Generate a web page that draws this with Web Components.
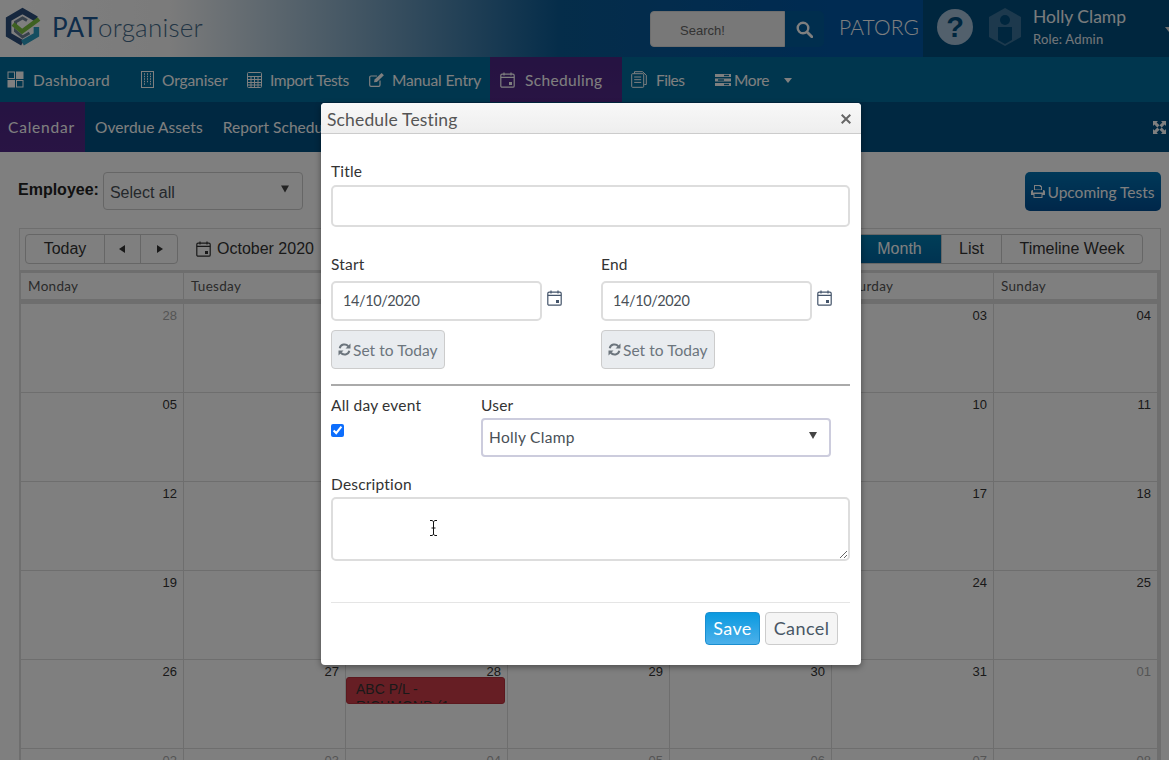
<!DOCTYPE html>
<html><head><meta charset="utf-8"><title>PATorganiser</title>
<style>html,body{margin:0;padding:0;background:#fff}body{font-family:Lato,"Liberation Sans",sans-serif}</style>
</head><body>
<pat-app></pat-app>
<script>
const GOTHIC = 'Lato,"Open Sans",sans-serif', ARIAL='"Liberation Sans",Arial,sans-serif';
function def(name, css, html, setup){
  customElements.define(name, class extends HTMLElement{
    connectedCallback(){
      if(this.shadowRoot) return;
      const r=this.attachShadow({mode:'open'});
      const h = typeof html==='function'? html(this):html;
      r.innerHTML=`<style>${css}</style>${h}`;
      if(setup) setup(r,this);
    }
  });
}
const ic={
 dash:'<svg width="17" height="17" viewBox="0 0 17 17" fill="none" stroke="currentColor"><rect x="1" y="1" width="6.5" height="6.5"/><rect x="9.5" y="1" width="6.5" height="6.5" fill="currentColor"/><rect x="1" y="9.5" width="6.5" height="6.5" fill="currentColor"/><rect x="9.5" y="9.5" width="6.5" height="6.5"/></svg>',
 org:'<svg width="13" height="17" viewBox="0 0 13 17" fill="none" stroke="currentColor"><rect x=".5" y=".5" width="12" height="16"/><path d="M3 3h1M6 3h1M9 3h1M3 5.5h1M6 5.5h1M9 5.5h1M3 8h1M6 8h1M9 8h1M3 10.5h1M6 10.5h1M9 10.5h1M3 13h1M9 13h1" stroke-width="1.4"/></svg>',
 calc:'<svg width="15" height="16" viewBox="0 0 15 16" fill="none" stroke="currentColor"><rect x=".5" y=".5" width="14" height="15" rx="1"/><path d="M.5 4.5h14M.5 7.5h14M.5 10.5h14M.5 13h14M4 4.5V15M7.5 4.5V15M11 4.5V15"/></svg>',
 edit:'<svg width="16" height="15" viewBox="0 0 16 15" fill="none" stroke="currentColor" stroke-width="1.2"><path d="M11 8.5V13a1.3 1.3 0 0 1-1.3 1.3H2A1.3 1.3 0 0 1 .7 13V5.3A1.3 1.3 0 0 1 2 4h6"/><path d="M5 10.2 5.6 7.6 12.6 .9l2.3 2.3-7 6.7z" fill="currentColor" stroke="none"/></svg>',
 cal:'<svg width="15" height="16" viewBox="0 0 15 16" fill="none" stroke="currentColor" stroke-width="1.2"><rect x=".8" y="2.2" width="13.4" height="13" rx="1.3"/><path d="M.8 5.4h13.4M4 .6v3M11 .6v3"/><rect x="9" y="10" width="3" height="3" fill="currentColor" stroke="none"/></svg>',
 files:'<svg width="16" height="17" viewBox="0 0 16 17" fill="none" stroke="currentColor"><path d="M3.500 2.500V.7h8l3.800 3.500v9.300h-2"/><rect x=".7" y="2.700" width="12" height="13.600" rx=".8"/><path d="M3.200 6h7M3.200 8.700h7M3.200 11.400h7"/></svg>',
 more:'<svg width="16" height="12" viewBox="0 0 16 12" fill="currentColor"><rect width="16" height="3"/><rect y="4.500" width="16" height="3"/><rect y="9" width="16" height="3"/><rect x="9" y=".8" width="5" height="1.400" fill="#006c9c"/><rect x="3" y="5.300" width="6" height="1.400" fill="#006c9c"/><rect x="9" y="9.800" width="5" height="1.400" fill="#006c9c"/></svg>',
 search:'<svg width="17" height="17" viewBox="0 0 17 17" fill="none" stroke="currentColor" stroke-width="2.400"><circle cx="7" cy="7" r="5.300"/><path d="M11 11l4.800 4.800" stroke-linecap="round" stroke-width="2.800"/></svg>',
 sync:'<svg width="13" height="13" viewBox="0 0 13 13" fill="none" stroke="currentColor" stroke-width="2"><path d="M1.700 5.300A4.900 4.900 0 0 1 10.300 3.300"/><path d="M11.300 7.700A4.900 4.900 0 0 1 2.700 9.700"/><path d="M12.500 .5v5h-5z M.5 12.500v-5h5z" fill="currentColor" stroke="none"/></svg>',
 print:'<svg width="14" height="13" viewBox="0 0 14 13" fill="currentColor"><path d="M3 0h6.500L11 1.500V5H3zM4 1v3.500h6V2H8.800V1zM1.500 5H2v2.500h10V5h.5A1.500 1.500 0 0 1 14 6.500V10h-2.500v3h-9v-3H0V6.500A1.500 1.500 0 0 1 1.500 5zM3.500 9v3h7V9z" fill-rule="evenodd"/></svg>',
 full:'<svg width="13" height="13" viewBox="0 0 13 13" fill="currentColor"><path d="M0 0h5L3.600 1.400 6.500 4.300 4.300 6.500 1.400 3.600 0 5zM13 0v5l-1.400-1.400-2.900 2.900-2.200-2.200 2.900-2.900L8 0zM0 13V8l1.400 1.400 2.900-2.900 2.200 2.200-2.900 2.900L5 13zM13 13H8l1.400-1.400-2.900-2.900 2.200-2.200 2.900 2.900L13 8z"/></svg>',
};

def('pat-logo',`:host{display:flex;align-items:center;gap:8px;padding-left:4px}
 svg{margin-bottom:4px}
 .t{font:300 26px ${GOTHIC};letter-spacing:.2px;color:#456b8a;line-height:1;margin-bottom:3px}b{font-weight:400;color:#1e5a96}`,
 `<svg width="40" height="42" viewBox="0 0 40 42" fill="none">
  <path d="M32.400 13 18.500 5 4.600 13v16l13.900 8" stroke="#2c4f7c" stroke-width="5.500"/>
  <path d="M18.500 37 32.400 29V21" stroke="#2a9cc0" stroke-width="5.500"/>
  <path d="M23 14.500 18.500 12 11.500 16v3" stroke="#6f8296" stroke-width="3"/>
  <path d="M11.500 26v-1l7 6 7-4" stroke="#6f8296" stroke-width="3"/>
  <path d="M9 18l9 7.500L35 13" stroke="#7cc242" stroke-width="4.500"/></svg>
  <span class="t"><b>PAT</b>organiser</span>`);

def('pat-topbar',`:host{display:flex;height:57px;background:linear-gradient(90deg,#fff 0,#f6f6f6 170px,#0a5a94 560px,#0056a4 830px);color:#fff}
 .sp{flex:1}
 .search{display:flex;align-self:flex-start;margin-top:11px;margin-right:15px}
 .inp{width:135px;height:36px;box-sizing:border-box;background:#f0f0f0;border:1px solid #ddd;border-radius:4px 0 0 4px;font:13px ${ARIAL};color:#666;display:flex;align-items:center;padding:3px 0 0 29px}
 .btn{width:39px;height:36px;background:#005c9c;border-radius:0 5px 5px 0;display:flex;align-items:center;justify-content:center;margin-top:0}
 .org{font:300 21px ${GOTHIC};letter-spacing:.1px;width:84px;line-height:54px;white-space:nowrap}
 .user{width:246px;background:#004c7c;display:flex;position:relative}
 .help{width:36px;height:36px;border-radius:50%;background:#a4c0d8;color:#004c7c;font:bold 29px/36px ${ARIAL};text-align:center;margin:9px 0 0 14px}
 .hex{margin:8px 0 0 15px}
 .who{margin-left:11px;padding-top:7px}
 .n{font:400 17.500px/20px ${GOTHIC};color:#f4f8fb}
 .r{font:400 13px/16px ${GOTHIC};margin-top:4px;color:#e8eef4;letter-spacing:.2px}
 .c{position:absolute;right:-4px;top:27px;border:4px solid transparent;border-top:5px solid #ddd}`,
 `<pat-logo></pat-logo><div class="sp"></div>
  <div class="search"><div class="inp">Search!</div><div class="btn">${ic.search}</div></div>
  <div class="org">PATORG</div>
  <div class="user"><div class="help">?</div>
   <svg class="hex" width="34" height="38" viewBox="0 0 34 38"><path d="M17 0 33 9v20L17 38 1 29V9z" fill="#3a739a"/><circle cx="17" cy="12" r="5" fill="#004c7c"/><path d="M10 19h14v13l-7 4-7-4z" fill="#004c7c"/></svg>
   <div class="who"><div class="n">Holly Clamp</div><div class="r">Role: Admin</div></div><span class="c"></span></div>`);

def('nav-item',`:host{display:flex;align-items:center;height:100%;color:#fff;font:400 15.500px ${GOTHIC};white-space:nowrap;box-sizing:border-box}
 :host([active]){background:linear-gradient(#4c2684,#522988)}
 span{display:flex;align-items:center}`,
 `<span><slot name="i"></slot></span><slot></slot>`);

def('pat-nav',`:host{display:flex;height:45px;background:#006c9c;color:#fff}`,
 ()=>{const it=(w,pl,gap,ls,svg,t,a)=>`<nav-item ${a?'active':''} style="width:${w}px;padding-left:${pl}px;letter-spacing:${ls}px"><span slot="i" style="display:flex;margin-right:${gap}px">${svg}</span>${t}</nav-item>`;
 return it(134,7,9,.35,ic.dash,'Dashboard')+it(106,7,8,-.1,ic.org,'Organiser')+it(122,7,8,-.4,ic.calc,'Import Tests')+it(128,7,7,-.15,ic.edit,'Manual Entry')+it(132,10,10,.35,ic.cal,'Scheduling',1)+it(84,9,9,-.5,ic.files,'Files')+
 `<nav-item style="padding-left:9px;letter-spacing:-.3px"><span slot="i" style="margin-right:3px;display:flex">${ic.more}</span>More<span style="margin-left:15px;margin-top:5px;border:4px solid transparent;border-top:5px solid #fff"></span></nav-item>`});

def('pat-subnav',`:host{display:flex;height:50px;background:#005082;color:#fff;font:400 15.500px ${GOTHIC};align-items:center;position:relative}
 a{height:100%;display:flex;align-items:center;padding:0 10px;margin:0;white-space:nowrap;letter-spacing:.05px}
 a.on{width:85px;box-sizing:border-box;padding:0 8px;letter-spacing:.8px;background:linear-gradient(#4c2684,#522988)}
 .sp{flex:1}.f{margin-right:3px;display:flex}`,
 `<a class="on">Calendar</a><a>Overdue Assets</a><a>Report Schedule</a><div class="sp"></div><span class="f">${ic.full}</span>`);

def('pat-select',`:host{display:flex;align-items:center;justify-content:space-between;box-sizing:border-box;border:1px solid #ccc;border-radius:4px;background:#fff;width:200px;height:38px;padding:3px 13px 0 6px;font:16px ${ARIAL};color:#495057}
 i{border:4.500px solid transparent;border-top:7px solid #444;transform:translateY(var(--a,-1.5px))}`,`<slot></slot><i></i>`);

def('pat-toolbar',`:host{display:flex;height:76px;padding:20px 8px 0 18px;box-sizing:border-box;align-items:flex-start}
 b{font:bold 16px/36px ${ARIAL};color:#222;margin-right:4px}
 .sp{flex:1}
 .up{width:136px;height:39px;box-sizing:border-box;border-radius:5px;background:linear-gradient(#0072b2,#004e94);color:#fff;display:flex;align-items:center;justify-content:center;gap:2px;font:400 15.500px ${GOTHIC};letter-spacing:0}`,
 `<b>Employee:</b><pat-select>Select all</pat-select><div class="sp"></div><div class="up">${ic.print}Upcoming Tests</div>`);

def('cal-cell',`:host{display:block;box-sizing:border-box;border-right:1px solid #ddd;border-bottom:1px solid #ddd;background:#fff;overflow:hidden;min-width:0}
 .d{font:13px/17px ${ARIAL};text-align:right;padding:3px 6px 0 0;color:#333;height:17px}
 :host([off]) .d{color:#aaa}`,
 (e)=>`<div class="d">${e.getAttribute('d')||''}</div><slot></slot>`);

def('cal-event',`:host{display:block;height:27px;box-sizing:border-box;margin:-3px 2px 0 0;background:#cc3c48;border:1px solid #b8303c;border-radius:3px;overflow:hidden;padding:3px 9px;font:14px/17px ${ARIAL};color:#333}`,`<slot></slot>`);

def('pat-calendar',`:host{display:block;margin:0 8px 0 19px;border:1px solid #ddd;height:540px;overflow:hidden;box-sizing:border-box;font-family:${ARIAL}}
 .bar{display:flex;align-items:flex-start;height:41px;padding:5px 17px 0 5px;box-sizing:border-box;color:#333;font:16px ${ARIAL}}
 .g{display:flex;height:30px;border:1px solid #ccc;border-radius:4px;background:#fff;box-sizing:border-box}
 .g span{display:flex;align-items:center;justify-content:center;border-right:1px solid #ccc;box-sizing:border-box}
 .g span:last-child{border-right:0}
 .t{width:79px}.a{width:36px}.mo{width:84px;background:linear-gradient(#007cb0,#0066a2);color:#fff}.li{width:60px}.tl{width:140px}
 .l{border:4px solid transparent;border-right:6px solid #333;margin-left:-6px}.r{border:4px solid transparent;border-left:6px solid #333;margin-right:-6px}
 .ti{display:flex;align-items:center;gap:6px;margin-left:18px;height:30px}.sp{flex:1}
 .grid{border-top:3px solid #ddd;background:#ddd}
 .row{display:grid;grid-template-columns:163px 162px 162px 162px 162px 162px 164px;border-left:1px solid #ddd;border-right:1px solid #ddd}
 .hd{height:26px;margin-bottom:5px}
 .hd div{background:#fff;border-right:1px solid #ddd;padding-left:7px;font:400 13.500px/26px ${GOTHIC};color:#555;letter-spacing:.3px}
 .w{height:89px}.wk{border-left:2px solid #ddd;margin-left:-1px}`,
 `<div class="bar"><div class="g"><span class="t">Today</span><span class="a"><i class="l"></i></span><span class="a"><i class="r"></i></span></div>
   <div class="ti">${ic.cal}<span>October 2020</span></div><div class="sp"></div>
   <div class="g"><span class="mo">Month</span><span class="li">List</span><span class="tl">Timeline Week</span></div></div>
  <div class="grid"><div class="row hd"><div>Monday</div><div>Tuesday</div><div></div><div></div><div></div><div>Saturday</div><div>Sunday</div></div>
  ${[[['28',1],'','','','','03','04'],['05','','','','','10','11'],['12','','','','','17','18'],['19','','','','','24','25'],['26','27','28','29','30','31',['01',1]],[['02',1],['03',1],['04',1],['05',1],['06',1],['07',1],['08',1]]].map(w=>`<div class="row w wk">${w.map(d=>{const off=Array.isArray(d);const v=off?d[0]:d;const ev=(v==='28'&&!off)?'<cal-event>ABC P/L - RICHMOND (1</cal-event>':'';return `<cal-cell d="${v}" ${off?'off':''}>${ev}</cal-cell>`}).join('')}</div>`).join('')}</div>`);

def('m-label',`:host{display:block;font:400 15.500px/20px ${GOTHIC};color:#333;letter-spacing:.2px}`,`<slot></slot>`);

def('date-field',`:host{display:block;width:270px;flex:none}
 .r{display:flex;align-items:flex-start;margin-top:7px}
 .i{width:211px;height:40px;box-sizing:border-box;border:2px solid #ddd;border-radius:5px;padding:0 10px;font:400 14.500px/36px ${GOTHIC};color:#495057;letter-spacing:-.4px}
 .ico{margin:9px 0 0 5px;color:#44546a;display:flex}
 .b{display:flex;align-items:center;gap:2px;width:114px;height:39px;box-sizing:border-box;margin-top:9px;background:#e9ecef;border:1px solid #ccc;border-radius:4px;color:#6c757d;font:400 15.500px ${GOTHIC};letter-spacing:.05px;padding-left:6px}`,
 (e)=>`<m-label>${e.getAttribute('label')}</m-label><div class="r"><div class="i">14/10/2020</div><span class="ico">${ic.cal}</span></div><div class="b">${ic.sync}Set to Today</div>`);

def('pat-modal',`:host{position:absolute;left:321px;top:103px;width:540px;height:562px;background:#fff;border-radius:4px;box-shadow:0 2px 6px rgba(0,0,0,.4);display:flex;flex-direction:column;overflow:hidden}
 .h{height:31px;box-sizing:border-box;background:linear-gradient(#f8f8f8,#eee);border-bottom:1px solid #ccc;padding:2px 0 0 6px;display:flex;align-items:center;justify-content:space-between;font:400 17.500px ${GOTHIC};color:#555;letter-spacing:.15px}
 .x{margin-right:10px;display:flex;color:#666}
 .b{padding:27px 11px 0 10px;flex:1;display:flex;flex-direction:column}
 input.t{display:block;width:100%;height:42px;box-sizing:border-box;border:2px solid #ddd;border-radius:5px;margin:4px 0 0;outline:0;flex:none}
 .dates{display:flex;margin-top:27px}
 hr{height:2px;border:0;background:#aaa;margin:15px 0 0;flex:none}
 .mid{display:flex;margin-top:9px}
 .ck{width:150px}
 input[type=checkbox]{display:block;width:13px;height:13px;margin:9px 0 0;accent-color:#0d6efd}
 pat-select{--a:1px;width:350px;height:39px;margin-top:3px;border:2px solid #ccd;padding:0 12px 2px 6px;font:400 15.500px ${GOTHIC};letter-spacing:.3px;color:#495057}
 .de{margin-top:17px}
 textarea{display:block;width:100%;height:64px;box-sizing:border-box;border:2px solid #ddd;border-radius:5px;margin:3px 0 0;outline:0}
 .f{margin-top:41px;border-top:1px solid #e5e5e5;padding:9px 12px 0 0;display:flex;justify-content:flex-end;gap:5px}
 .s,.c{height:33px;box-sizing:border-box;border-radius:4px;display:flex;align-items:center;justify-content:center;padding-bottom:2px;font:400 18px ${GOTHIC};letter-spacing:.4px}
 .s{width:55px;background:linear-gradient(#0a9ae0,#4cb0ea);color:#fff;border:1px solid #1a8ed0}
 .c{width:73px;background:#f5f5f5;border:1px solid #ccc;color:#495765}
 .cur{position:absolute;left:108px;top:417px}`,
 `<div class="h">Schedule Testing<span class="x"><svg width="10" height="10" viewBox="0 0 10 10" stroke="currentColor" stroke-width="2"><path d="M.7.7l8.600 8.600M9.300.7.700 9.300"/></svg></span></div>
 <div class="b"><m-label>Title</m-label><input class="t" aria-label="Title">
  <div class="dates"><date-field label="Start"></date-field><date-field label="End"></date-field></div>
  <hr>
  <div class="mid"><div class="ck"><m-label>All day event</m-label><input type="checkbox" checked aria-label="All day event"></div>
   <div><m-label>User</m-label><pat-select>Holly Clamp</pat-select></div></div>
  <div class="de"><m-label>Description</m-label><textarea aria-label="Description"></textarea></div>
  <div class="f"><div class="s">Save</div><div class="c">Cancel</div></div></div>
  <svg class="cur" width="9" height="16" viewBox="0 0 9 16" fill="none" stroke="#111"><path d="M1 .5h2l1.500 1 1.500-1h2M4.500 1.500v13M1 15.500h2l1.500-1 1.500 1h2M2.500 8h4"/></svg>`);

def('pat-app',`:host{display:block;position:relative;width:1169px;height:760px;overflow:hidden;background:#fff}
 .ov{position:absolute;inset:0;background:rgba(0,0,0,.5)}`,
 `<pat-topbar></pat-topbar><pat-nav></pat-nav><pat-subnav></pat-subnav><pat-toolbar></pat-toolbar><pat-calendar></pat-calendar><div class="ov"></div><pat-modal></pat-modal>`);
</script>
</body></html>
